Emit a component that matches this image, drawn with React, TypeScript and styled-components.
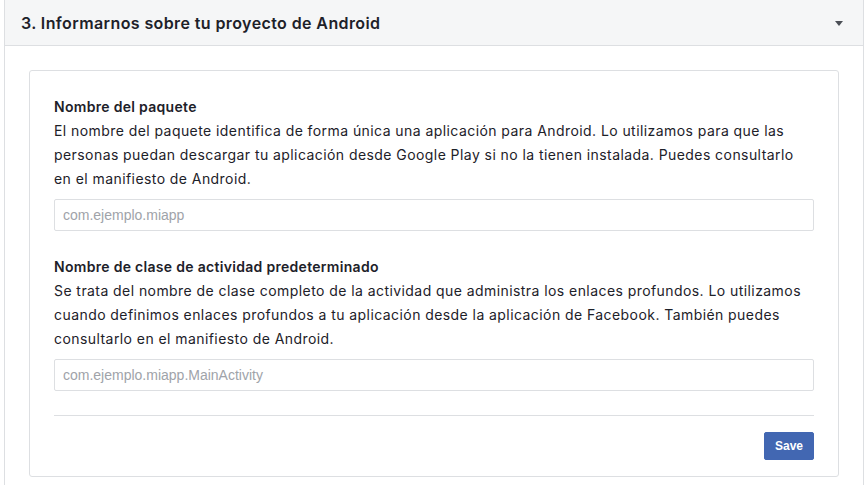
import styled, { createGlobalStyle } from 'styled-components'

const GlobalStyle = createGlobalStyle`
	body {
		margin: 0;
		background: #fff;
		font-family: Inter, "Liberation Sans", Arial, sans-serif;
		color: #1d2129;
	}
`

const fields = [
	{
		label: 'Nombre del paquete',
		description:
			'El nombre del paquete identifica de forma única una aplicación para Android. Lo utilizamos para que las personas puedan descargar tu aplicación desde Google Play si no la tienen instalada. Puedes consultarlo en el manifiesto de Android.',
		placeholder: 'com.ejemplo.miapp',
	},
	{
		label: 'Nombre de clase de actividad predeterminado',
		description:
			'Se trata del nombre de clase completo de la actividad que administra los enlaces profundos. Lo utilizamos cuando definimos enlaces profundos a tu aplicación desde la aplicación de Facebook. También puedes consultarlo en el manifiesto de Android.',
		placeholder: 'com.ejemplo.miapp.MainActivity',
	},
]

const App = () => {
	return (
		<>
			<GlobalStyle />
			<Panel>
				<PanelHeader>
					<Title>3. Informarnos sobre tu proyecto de Android</Title>
					<Caret />
				</PanelHeader>
				<PanelBody>
					<Card>
						{fields.map((field) => (
							<Field key={field.label}>
								<Label>{field.label}</Label>
								<Description>{field.description}</Description>
								<Input placeholder={field.placeholder} />
							</Field>
						))}
						<Footer>
							<SaveButton>Save</SaveButton>
						</Footer>
					</Card>
				</PanelBody>
			</Panel>
		</>
	)
}

export default App

const Panel = styled.div`
	margin: 0 3px 0 4px;
	border: 1px solid #dddfe2;
	border-top: none;
	background: #fff;
	min-height: 500px;
	box-sizing: border-box;
`

const PanelHeader = styled.div`
	display: flex;
	align-items: center;
	justify-content: space-between;
	height: 46px;
	padding: 0 20px 0 16px;
	background: #f5f6f7;
	border-bottom: 1px solid #dddfe2;
	box-sizing: border-box;
`

const Title = styled.h2`
	margin: 0;
	font-size: 16px;
	font-weight: 600;
	line-height: 20px;
	letter-spacing: 0.4px;
	color: #1d2129;
`

const Caret = styled.span`
	width: 0;
	height: 0;
	border-left: 4px solid transparent;
	border-right: 4px solid transparent;
	border-top: 5px solid #4b4f56;
	margin-top: 2px;
`

const PanelBody = styled.div`
	padding: 24px;
`

const Card = styled.div`
	border: 1px solid #dddfe2;
	border-radius: 3px;
	padding: 24px 24px 0;
	background: #fff;
`

const Field = styled.div`
	display: flex;
	flex-direction: column;
	margin-bottom: 24px;
`

const Label = styled.div`
	font-size: 14px;
	font-weight: 600;
	line-height: 24px;
	letter-spacing: 0.3px;
	color: #1d2129;
`

const Description = styled.div`
	font-size: 14px;
	line-height: 24px;
	letter-spacing: 0.43px;
	color: #1d2129;
	margin-bottom: 8px;
`

const Input = styled.input`
	height: 32px;
	box-sizing: border-box;
	border: 1px solid #dddfe2;
	border-radius: 2px;
	padding: 0 8px;
	font-family: "Liberation Sans", Arial, sans-serif;
	font-size: 14px;
	color: #1d2129;
	outline: none;
	&::placeholder {
		color: #a0a3a9;
	}
`

const Footer = styled.div`
	display: flex;
	justify-content: flex-end;
	border-top: 1px solid #dddfe2;
	padding: 16px 0;
`

const SaveButton = styled.button`
	height: 28px;
	width: 50px;
	padding: 0;
	border: 1px solid #4267b2;
	border-radius: 2px;
	background: #4267b2;
	color: #fff;
	font-family: "Liberation Sans", Arial, sans-serif;
	font-size: 12px;
	font-weight: bold;
	cursor: pointer;
`
